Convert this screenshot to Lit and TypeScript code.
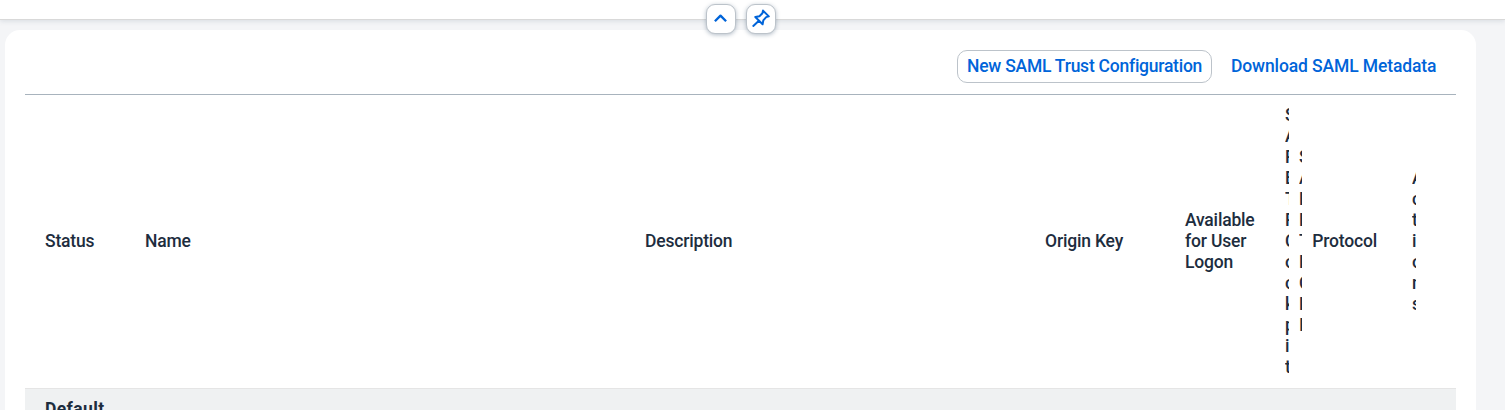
import { LitElement, html, css } from "lit";
import { customElement } from "lit/decorators.js";
import { classMap } from "lit/directives/class-map.js";

interface Column {
  label: string;
  squeezed?: boolean;
  slim?: boolean;
}

const columns: Column[] = [
  { label: "Status" },
  { label: "Name" },
  { label: "Description" },
  { label: "Origin Key" },
  { label: "Available for User Logon" },
  { label: "SAP BTP Cockpit", squeezed: true },
  { label: "SAP BTP CLI", squeezed: true, slim: true },
  { label: "Protocol" },
  { label: "Actions", squeezed: true },
];

@customElement("app-root")
export class AppRoot extends LitElement {
  static styles = css`
    :host {
      display: block;
      height: 410px;
      overflow: hidden;
      box-sizing: border-box;
      background: #f4f5f7;
      color: #1d2d3e;
      font: 500 17.5px/21px Roboto, "Liberation Sans", sans-serif;
    }
    * { box-sizing: border-box; }
    .title {
      position: relative;
      height: 19px;
      background: #fff;
      box-shadow: 0 1px 0 #d9d9d9, 0 2px 5px rgba(85, 107, 130, 0.18);
    }
    .controls {
      position: absolute;
      top: 4px;
      left: 706px;
      display: flex;
      gap: 10px;
    }
    .round {
      width: 30px;
      height: 30px;
      padding: 0;
      display: flex;
      align-items: center;
      justify-content: center;
      border: 1px solid #bcc3ca;
      border-radius: 9px;
      background: #fff;
      color: #0064d9;
      box-shadow: 0 1px 4px rgba(85, 107, 130, 0.45);
    }
    .round svg { display: block; }
    .card {
      margin: 11px 29px 0 5px;
      height: 400px;
      padding: 20px 20px 0;
      border-radius: 15px;
      background: #fff;
    }
    .toolbar {
      height: 45px;
      display: flex;
      justify-content: flex-end;
      align-items: flex-start;
      gap: 9px;
      padding-right: 10px;
      border-bottom: 1px solid #a8b3bd;
    }
    .action {
      height: 33px;
      padding: 0 9px;
      border: 1px solid transparent;
      border-radius: 10px;
      background: transparent;
      color: #0064d9;
      font: inherit;
      white-space: nowrap;
    }
    .framed { width: 255px; border-color: #bcc3ca; letter-spacing: -0.24px; }
    .plain { width: 225px; letter-spacing: -0.12px; }
    .head {
      height: 293px;
      padding: 10px 20px;
      display: grid;
      grid-template-columns: 100px 500px 400px 140px 100px 14px 13.3px 99.7px 4px;
      align-items: center;
      letter-spacing: -0.18px;
    }
    .squeezed { width: 4px; overflow: hidden; word-break: break-all; }
    .slim { width: 3px; }
    .wrap { padding-right: 20px; }
    .group {
      height: 50px;
      padding: 10px 20px;
      border-top: 1px solid #e5e5e5;
      background: #eff1f2;
      font-weight: 700;
      letter-spacing: 0.4px;
    }
  `;

  render() {
    return html`
      <header class="title">
        <div class="controls">
          <button class="round" aria-label="Collapse">
            <svg width="20" height="20" viewBox="0 0 20 20" fill="none" stroke="currentColor" stroke-width="2.3" stroke-linejoin="round"><path d="M3.9 12.3 9.5 6.6l5.6 5.7" /></svg>
          </button>
          <button class="round" aria-label="Pin">
            <svg width="20" height="20" viewBox="0 0 20 20" fill="none" stroke="currentColor" stroke-width="2" stroke-linecap="round" stroke-linejoin="round"><path d="M12 1.6 17.8 7.4l-2.6.7-2.9 3.2-.7 4-7.3-7.3 4.1-.7 3-3zM7.6 11.9l-5.3 5" /></svg>
          </button>
        </div>
      </header>
      <main class="card">
        <div class="toolbar">
          <button class="action framed">New SAML Trust Configuration</button>
          <button class="action plain">Download SAML Metadata</button>
        </div>
        <div class="head">
          ${columns.map(
            (c) => html`<div class=${classMap({ squeezed: !!c.squeezed, slim: !!c.slim, wrap: c.label.startsWith("Available") })}>${c.label}</div>`
          )}
        </div>
        <div class="group">Default</div>
      </main>
    `;
  }
}
